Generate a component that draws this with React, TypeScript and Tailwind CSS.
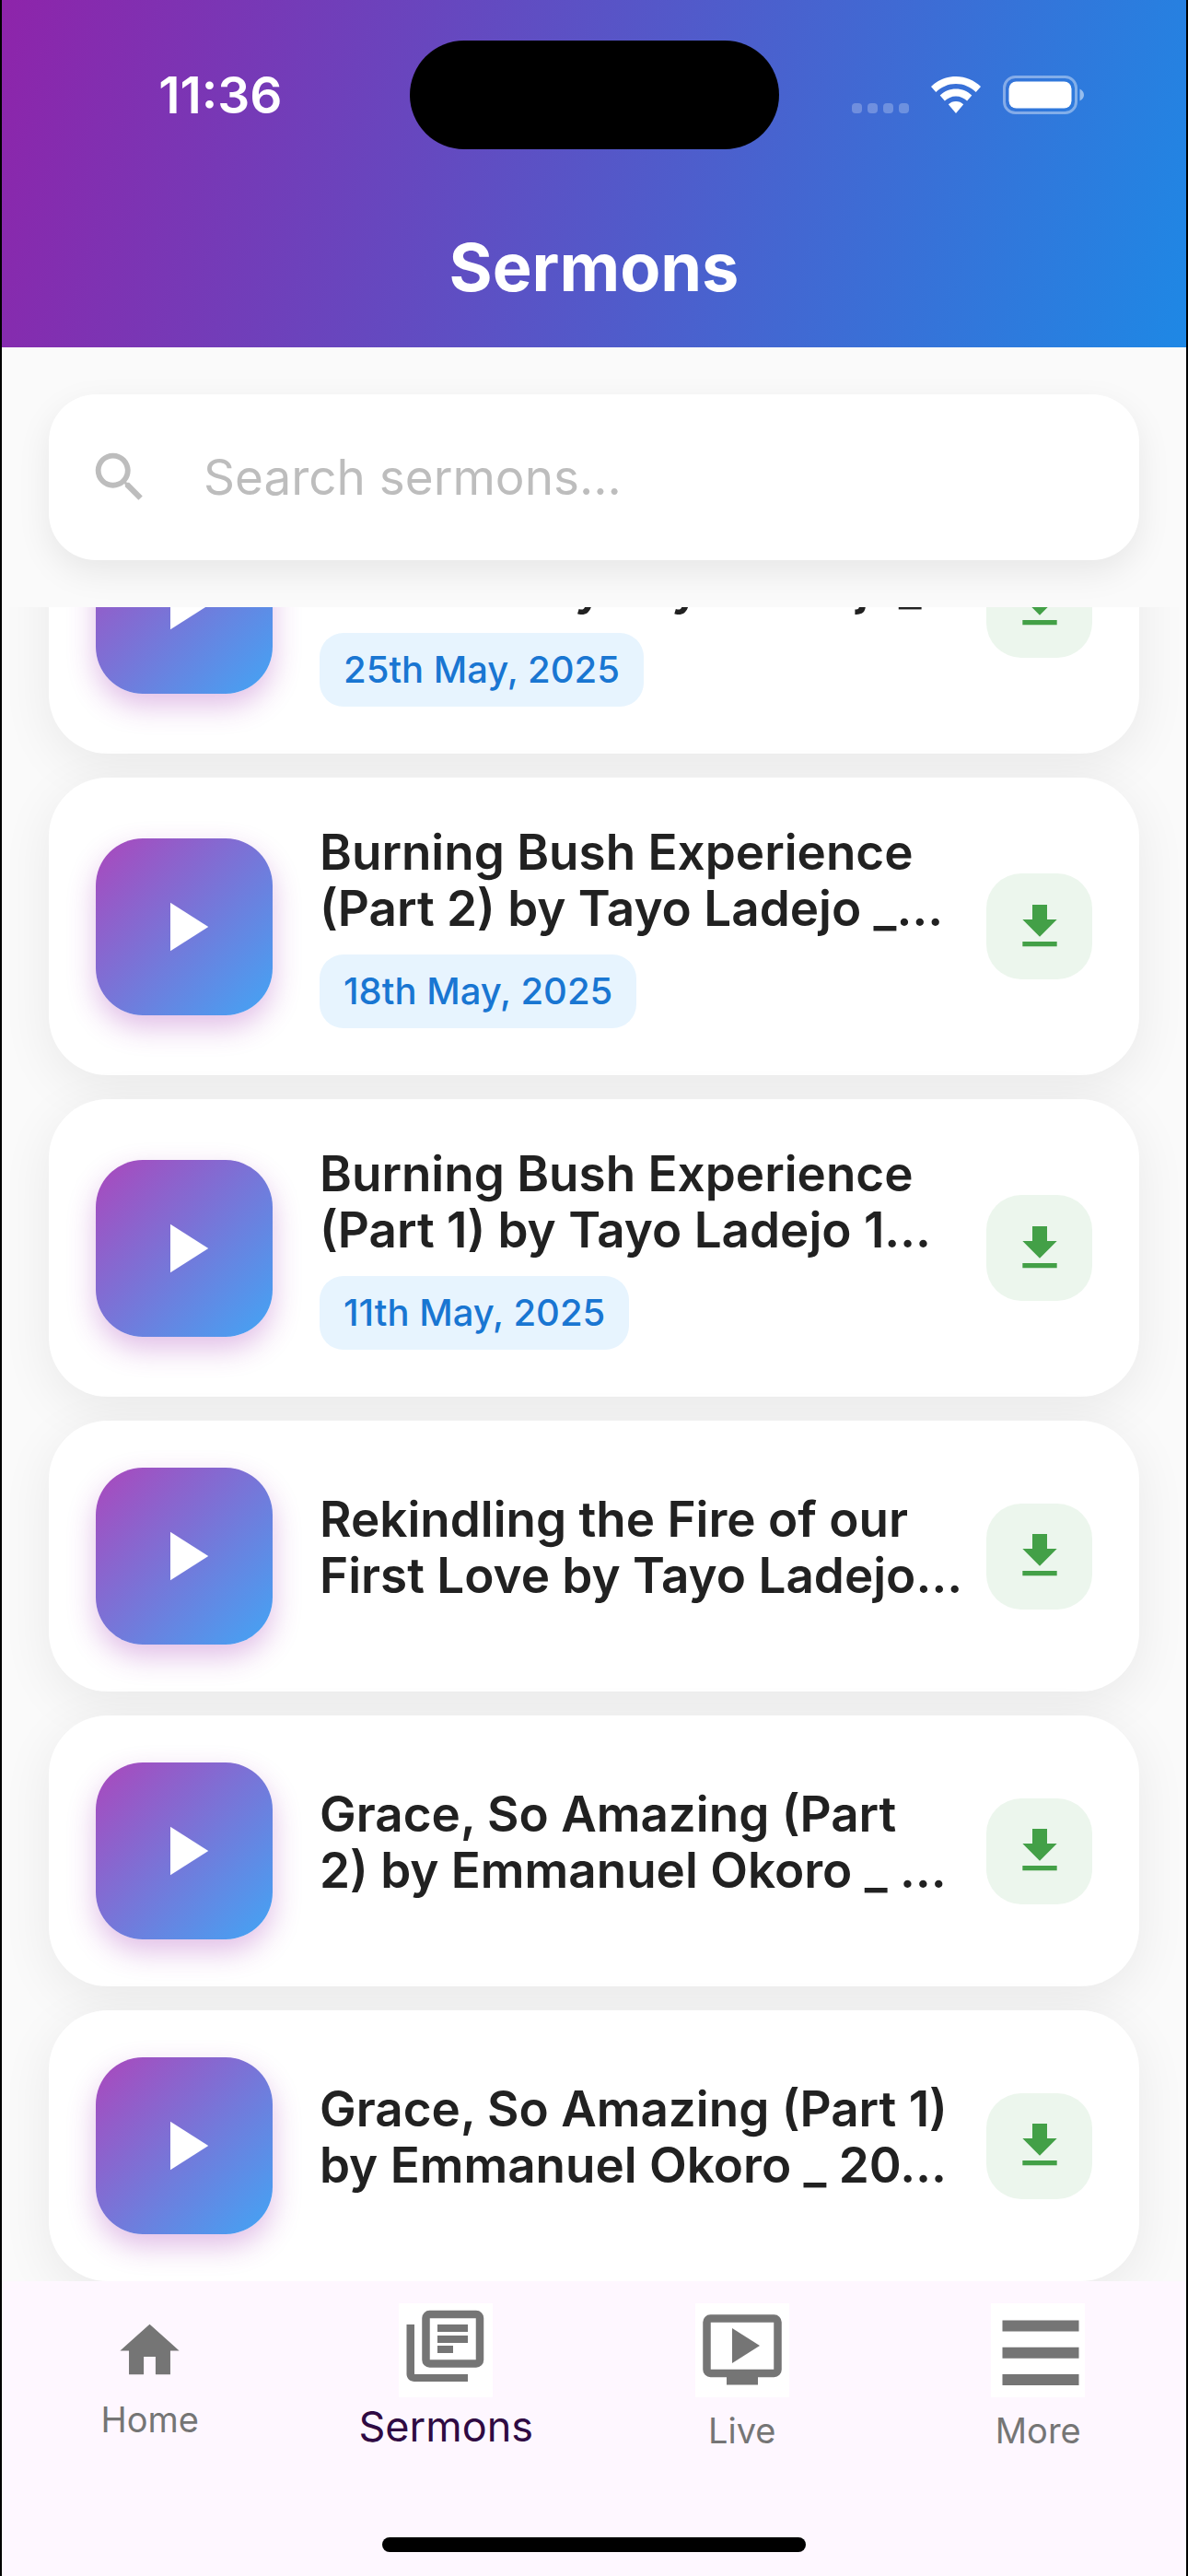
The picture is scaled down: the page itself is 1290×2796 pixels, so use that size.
import { useState } from 'react';
import { MdDownload, MdHome, MdPlayArrow, MdSearch } from 'react-icons/md';

type Sermon = {
  title: string;
  date?: string;
};

const SERMONS: Sermon[] = [
  { title: 'Burning Bush Experience\nLesson 3 by Tayo Ladejo_…', date: '25th May, 2025' },
  { title: 'Burning Bush Experience\n(Part 2) by Tayo Ladejo _…', date: '18th May, 2025' },
  { title: 'Burning Bush Experience\n(Part 1) by Tayo Ladejo 1…', date: '11th May, 2025' },
  { title: 'Rekindling the Fire of our\nFirst Love by Tayo Ladejo…' },
  { title: 'Grace, So Amazing (Part\n2) by Emmanuel Okoro _ …' },
  { title: 'Grace, So Amazing (Part 1)\nby Emmanuel Okoro _ 20…' },
];

function StatusBar() {
  return (
    <div className="grid grid-cols-[1fr_401px_1fr] items-center pt-11">
      <span className="pl-8 text-center text-[55px] leading-[60px] font-semibold">11:36</span>
      <div className="h-[118px] rounded-full bg-black" />
      <div className="flex items-center justify-center gap-6 pr-8">
        <svg className="h-[42px] w-[62px]" viewBox="0 0 62 42" fill="#fff" fillOpacity="0.25">
          <rect x="0" y="30" width="11" height="11" rx="4" />
          <rect x="17" y="30" width="11" height="11" rx="4" />
          <rect x="34" y="30" width="11" height="11" rx="4" />
          <rect x="51" y="30" width="11" height="11" rx="4" />
        </svg>
        <svg className="h-[42px] w-[54px]" viewBox="0 0 54 42" fill="#fff">
          <path d="M27 1C16.500 1 7 5.200 0 12l5.300 6C11 12.400 18.600 9 27 9s16 3.400 21.700 9L54 12C47 5.200 37.500 1 27 1z" />
          <path d="M27 14.500c-6.700 0-12.700 2.600-17.300 7l5.200 6c3.200-3 7.400-5 12.100-5s8.900 2 12.100 5l5.200-6c-4.600-4.400-10.600-7-17.300-7z" />
          <path d="M27 28c-3.200 0-6 1.200-8.200 3.300L27 41l8.200-9.700C33 29.200 30.200 28 27 28z" />
        </svg>
        <svg className="h-[42px] w-[88px]" viewBox="0 0 88 42">
          <rect x="1.500" y="1.500" width="78" height="39" rx="12" fill="none" stroke="#fff" strokeOpacity="0.400" strokeWidth="3" />
          <rect x="6.500" y="6.500" width="68" height="29" rx="8" fill="#fff" />
          <path d="M83.500 14.500c2.800 1.300 4.500 3.700 4.500 6.500s-1.700 5.200-4.500 6.500z" fill="#fff" fillOpacity="0.500" />
        </svg>
      </div>
    </div>
  );
}

function SermonCard({ sermon }: { sermon: Sermon }) {
  return (
    <li className="flex shrink-0 items-center rounded-[64px] bg-white p-[51px] shadow-[0_13px_56px_rgba(0,0,0,0.07)]">
      <button
        type="button"
        aria-label="Play"
        className="flex size-[192px] shrink-0 items-center justify-center rounded-[51px] bg-[linear-gradient(135deg,#ab47bc,#42a5f5)] text-white shadow-[0_13px_31px_rgba(156,39,176,0.3)]"
      >
        <MdPlayArrow className="size-[90px]" />
      </button>
      <div className="min-w-0 flex-1 pl-[51px]">
        <h2 className="mb-[19px] text-[53px] leading-[61px] font-semibold whitespace-pre text-[#212121]">
          {sermon.title}
        </h2>
        {sermon.date && (
          <span className="inline-block rounded-[26px] bg-[#e7f4fe] px-[26px] align-top text-[40px] leading-[80px] font-medium text-[#1976d2]">
            {sermon.date}
          </span>
        )}
      </div>
      <button
        type="button"
        aria-label="Download"
        className="flex size-[115px] shrink-0 items-center justify-center rounded-[38px] bg-[#ecf6ed] text-[#43a047]"
      >
        <MdDownload className="size-[64px]" />
      </button>
    </li>
  );
}

function SermonsIcon() {
  return (
    <svg className="size-[102px] bg-white" viewBox="0 0 102 102" fill="#757575">
      <rect x="29.500" y="12" width="58.500" height="53.500" rx="4" fill="none" stroke="#757575" strokeWidth="8.500" />
      <path d="M42 23h33v8H42zM42 35h33v8H42zM42 46h17v8H42z" />
      <path d="M8.500 23H17v54h58v8H17c-4.700 0-8.500-3.600-8.500-8z" />
    </svg>
  );
}

function LiveIcon() {
  return (
    <svg className="size-[102px] bg-white" viewBox="0 0 102 102" fill="#757575">
      <rect x="12.500" y="16.500" width="77" height="59.500" rx="4" fill="none" stroke="#757575" strokeWidth="8.500" />
      <path d="M34 76h34v12.500H34z" />
      <path d="M40 27v38l30-19z" />
    </svg>
  );
}

function MoreIcon() {
  return (
    <svg className="size-[102px] bg-white" viewBox="0 0 102 102" fill="#757575">
      <path d="M12.500 18.500h83v12h-83zM12.500 47.700h83v12h-83zM12.500 77h83v12h-83z" />
    </svg>
  );
}

const TABS = [
  { label: 'Home', icon: <MdHome className="size-[77px] text-[#757575]" /> },
  { label: 'Sermons', icon: <SermonsIcon /> },
  { label: 'Live', icon: <LiveIcon /> },
  { label: 'More', icon: <MoreIcon /> },
];

export default function App() {
  const [query, setQuery] = useState('');
  const [tab, setTab] = useState('Sermons');

  const sermons = SERMONS.filter((s) => s.title.toLowerCase().includes(query.toLowerCase()));

  return (
    <div className="flex h-screen flex-col overflow-hidden border-x-2 border-black bg-[#fafafa] font-['Inter',sans-serif]">
      <header className="bg-[linear-gradient(106deg,#8e24aa,#1e88e5)] text-white">
        <StatusBar />
        <h1 className="mt-20 pb-[39px] text-center text-[72px] leading-[96px] font-bold">Sermons</h1>
      </header>

      <div className="overflow-hidden p-[51px]">
        <label className="flex h-[180px] items-center rounded-[51px] bg-white px-[42px] shadow-[0_13px_37px_rgba(0,0,0,0.08)]">
          <MdSearch className="size-[70px] shrink-0 text-[#bdbdbd]" />
          <input
            type="text"
            aria-label="Search sermons"
            className="ml-14 min-w-0 flex-1 text-[53px] leading-[61px] text-[#212121] outline-none placeholder:text-[#bdbdbd]"
            placeholder="Search sermons..."
            value={query}
            onChange={(e) => setQuery(e.target.value)}
          />
        </label>
      </div>

      <main className="flex min-h-0 flex-1 flex-col justify-end overflow-hidden px-[51px]">
        <ul className="flex flex-col gap-[26px]">
          {sermons.map((s) => (
            <SermonCard key={s.title} sermon={s} />
          ))}
        </ul>
      </main>

      <nav className="bg-[#fef7ff] pb-[26px]">
        <div className="grid grid-cols-4 items-center py-6">
          {TABS.map((t) => (
            <button
              key={t.label}
              type="button"
              onClick={() => setTab(t.label)}
              className="flex flex-col items-center gap-[13px]"
            >
              {t.icon}
              {t.label === tab ? (
                <span className="mb-2 text-[45px] leading-[38px] text-[#2f0a43]">{t.label}</span>
              ) : (
                <span className="text-[38px] leading-[46px] text-[#757575]">{t.label}</span>
              )}
            </button>
          ))}
        </div>
        <div className="mx-auto mt-[69px] h-4 w-[460px] rounded-full bg-black" />
      </nav>
    </div>
  );
}
